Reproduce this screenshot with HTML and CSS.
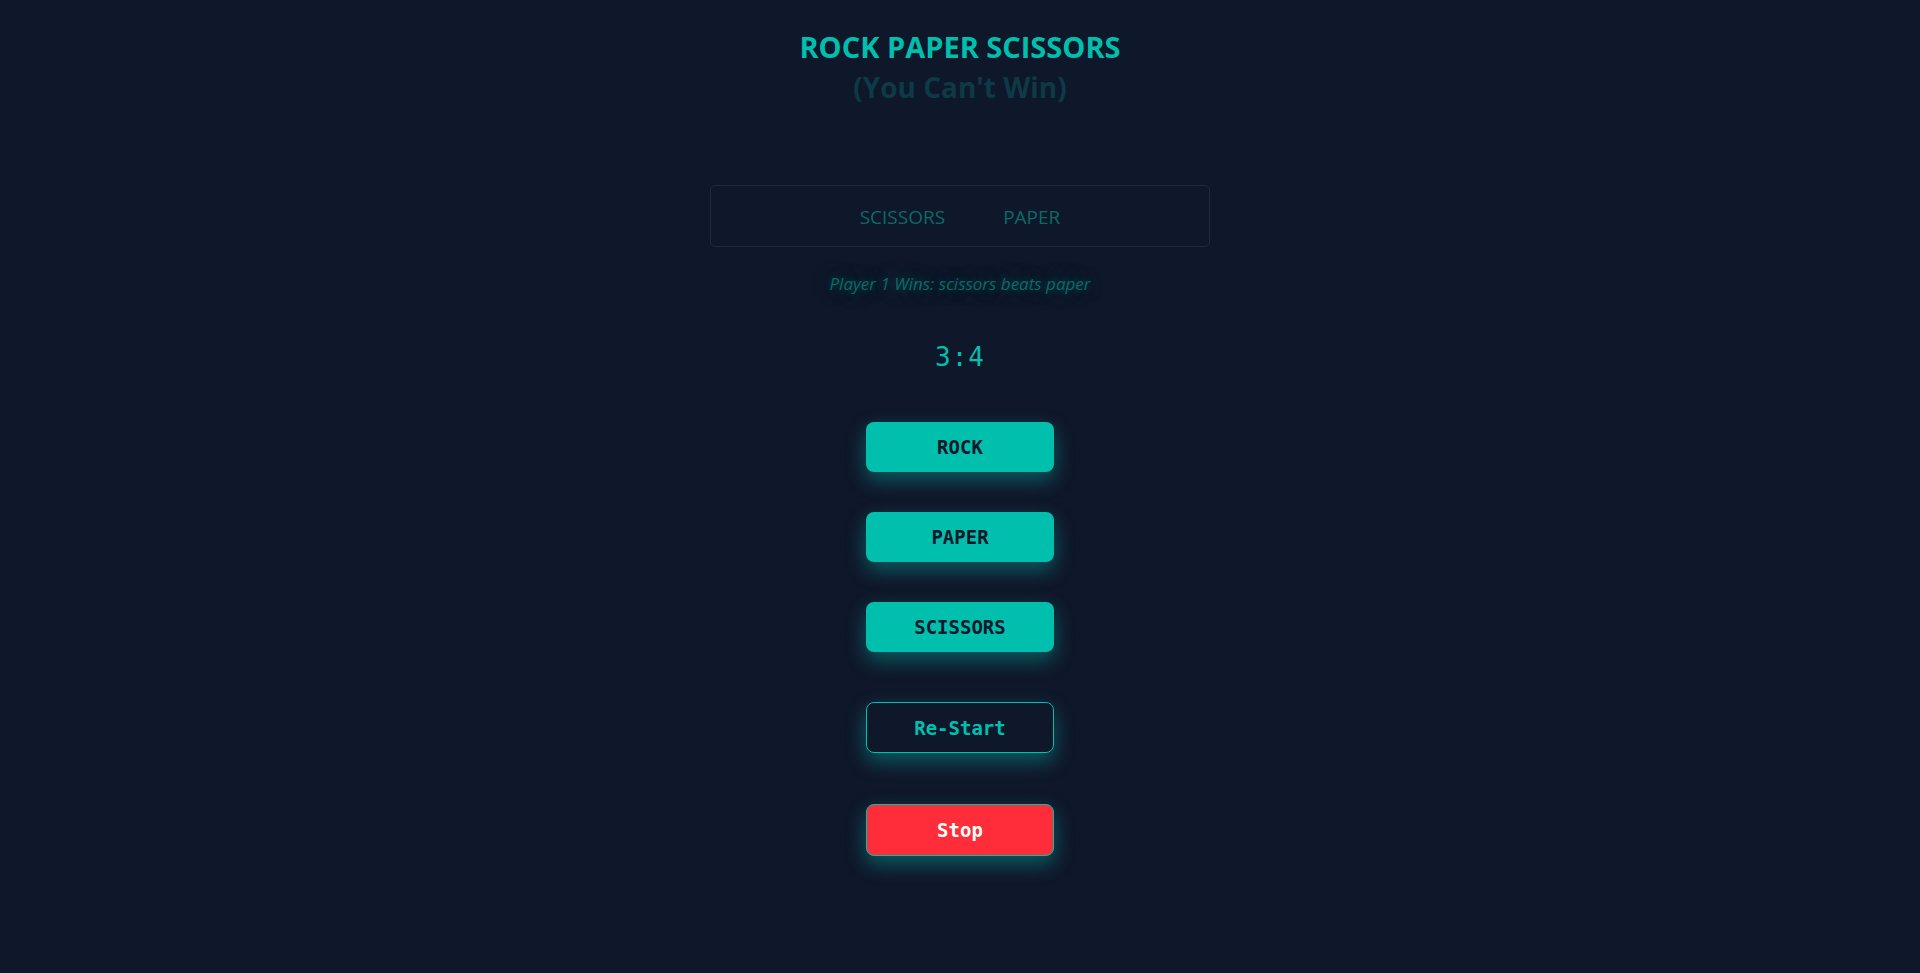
FILE: index.html
```html
<!DOCTYPE html>
<html lang="en">
<head>
<meta charset="utf-8">
<title>Rock Paper Scissors</title>
<link rel="stylesheet" href="styles.css">
</head>
<body>
<main class="game">
  <header class="header">
    <h1 class="title">ROCK PAPER SCISSORS</h1>
    <p class="subtitle">(You Can't Win)</p>
  </header>
  <section class="picks">
    <span class="pick">SCISSORS</span>
    <span class="pick">PAPER</span>
  </section>
  <p class="message">Player 1 Wins: scissors beats paper</p>
  <div class="score">3:4</div>
  <div class="choices">
    <button class="btn btn-choice">ROCK</button>
    <button class="btn btn-choice">PAPER</button>
    <button class="btn btn-choice">SCISSORS</button>
  </div>
  <div class="controls">
    <button class="btn btn-outline">Re-Start</button>
    <button class="btn btn-stop">Stop</button>
  </div>
</main>
</body>
</html>
```
FILE: styles.css
```css
* { box-sizing: border-box; }
html, body {
  margin: 0;
  padding: 0;
  background: #0f172a;
  height: 100%;
}
body {
  font-family: "Open Sans", "Noto Sans", sans-serif;
  color: #00bfad;
}
.game {
  display: flex;
  flex-direction: column;
  align-items: center;
}
.header {
  text-align: center;
  padding-top: 27px;
}
.title {
  margin: 0;
  font-size: 29px;
  line-height: 40px;
  font-weight: 700;
  color: #00bfad;
}
.subtitle {
  margin: 0;
  font-size: 28px;
  line-height: 40px;
  font-weight: 700;
  color: #0c3a46;
}
.picks {
  margin-top: 78px;
  width: 500px;
  height: 62px;
  border: 1px solid #1e293b;
  border-radius: 5px;
  display: flex;
  justify-content: center;
  align-items: center;
  gap: 58px;
}
.pick {
  font-size: 19px;
  color: #0b6a66;
  padding-top: 2px;
}
.message {
  margin: 21px 0 0;
  padding: 0 12px;
  font-size: 17px;
  line-height: 32px;
  font-style: italic;
  color: #0b6a66;
  text-shadow: 0 0 10px rgba(0, 191, 173, 0.3), 0 0 24px rgba(0, 191, 173, 0.35);
}
.score {
  margin-top: 39px;
  font-family: "DejaVu Sans Mono", monospace;
  font-size: 26px;
  line-height: 36px;
  color: #00bfad;
  letter-spacing: 1px;
}
.choices {
  margin-top: 47px;
  display: flex;
  flex-direction: column;
  gap: 40px;
}
.controls {
  margin-top: 50px;
  display: flex;
  flex-direction: column;
  gap: 51px;
}
.btn {
  width: 188px;
  height: 50px;
  border-radius: 8px;
  font-family: "DejaVu Sans Mono", monospace;
  font-weight: 700;
  font-size: 19px;
  cursor: pointer;
  box-shadow: 0 8px 20px rgba(0, 191, 173, 0.42);
}
.btn-choice {
  background: #00bfad;
  color: #0f172a;
  border: none;
}
.btn-outline {
  height: 51px;
  background: transparent;
  border: 1px solid #00bfad;
  color: #00bfad;
}
.btn-stop {
  height: 52px;
  background: #ff2d3a;
  border: 1px solid #00bfad;
  color: #e6fff8;
}
```
